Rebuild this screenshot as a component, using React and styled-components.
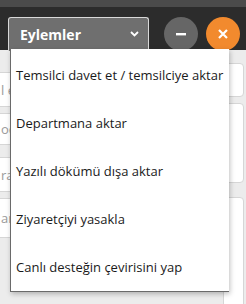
import React from "react";
import styled, { createGlobalStyle } from "styled-components";

const Global = createGlobalStyle`
  html, body { margin: 0; padding: 0; background: #ececec; }
  body { font-family: "Open Sans", "Noto Sans", sans-serif; }
`;

const Page = styled.div`
  position: relative;
  width: 246px;
  height: 304px;
  overflow: hidden;
  background: #ececec;
`;

const TopStrip = styled.div`
  height: 7px;
  background: #4b4b4b;
`;

const HeaderBar = styled.div`
  height: 43px;
  background: #2c2c2c;
  display: flex;
  align-items: flex-start;
  padding: 10px 0 0 8px;
  box-sizing: border-box;
`;

const ActionsButton = styled.button`
  width: 141px;
  height: 34px;
  box-sizing: border-box;
  background: #6f6f6f;
  border: 1px solid #d9d9d9;
  border-bottom: none;
  border-radius: 3px 3px 0 0;
  color: #fff;
  font-family: "Open Sans", sans-serif;
  font-weight: 700;
  font-size: 14px;
  display: flex;
  align-items: center;
  justify-content: space-between;
  padding: 0 9px 1px 11px;
  margin: 0;
`;

const RoundButton = styled.div`
  width: 34px;
  height: 34px;
  border-radius: 50%;
  background: ${(p) => p.$bg};
  display: flex;
  align-items: center;
  justify-content: center;
  margin-left: ${(p) => p.$ml}px;
`;

const Body = styled.div`
  display: grid;
  grid-template-columns: 216px 1fr;
  column-gap: 7px;
`;

const Column = styled.div`
  display: flex;
  flex-direction: column;
  padding-top: ${(p) => p.$pt}px;
  gap: ${(p) => p.$gap}px;
`;

const Field = styled.div`
  height: ${(p) => p.$h}px;
  box-sizing: border-box;
  background: #fff;
  border: 1px solid #d6d6d6;
  border-radius: 4px;
  margin-left: ${(p) => p.$ml || 0}px;
  margin-right: ${(p) => p.$mr || 0}px;
  margin-top: ${(p) => p.$mt || 0}px;
  display: flex;
  align-items: center;
  color: #9a9a9a;
  font-size: 13px;
  padding-left: 6px;
  white-space: nowrap;
  overflow: hidden;
`;

const Menu = styled.ul`
  position: absolute;
  top: 49px;
  left: 10px;
  width: 219px;
  margin: 0;
  padding: 2px 0 0;
  list-style: none;
  background: #fff;
  box-sizing: border-box;
  border-left: 1px solid #6a6a6a;
  border-bottom: 1px solid #6a6a6a;
  box-shadow: 1px 2px 5px rgba(0, 0, 0, 0.25);
`;

const MenuItem = styled.li`
  height: 48px;
  display: flex;
  align-items: center;
  padding-left: 5px;
  font-family: "Open Sans", sans-serif;
  font-size: 13px;
  color: #1a1a1a;
  white-space: nowrap;
`;

const items = [
  "Temsilci davet et / temsilciye aktar",
  "Departmana aktar",
  "Yazılı dökümü dışa aktar",
  "Ziyaretçiyi yasakla",
  "Canlı desteğin çevirisini yap",
];

export default function App() {
  return (
    <>
      <Global />
      <Page>
        <TopStrip />
        <HeaderBar>
          <ActionsButton>
            <span>Eylemler</span>
            <svg width="9" height="6" viewBox="0 0 9 6">
              <path d="M1 1 L4.5 4.5 L8 1" stroke="#fff" strokeWidth="1.8" fill="none" />
            </svg>
          </ActionsButton>
          <RoundButton $bg="#666666" $ml={15}>
            <svg width="12" height="12" viewBox="0 0 12 12">
              <rect x="1" y="5" width="10" height="2.4" fill="#fff" />
            </svg>
          </RoundButton>
          <RoundButton $bg="#f28a2e" $ml={8}>
            <svg width="12" height="12" viewBox="0 0 12 12">
              <path d="M2 2 L10 10 M10 2 L2 10" stroke="#fff" strokeWidth="2.2" />
            </svg>
          </RoundButton>
        </HeaderBar>
        <Body>
          <Column $pt={22} $gap={6}>
            <Field $h={35} $ml={-6}>l e</Field>
            <Field $h={32} $ml={-6}>od</Field>
            <Field $h={35} $ml={-6} $mt={6}>ra</Field>
            <Field $h={40} $ml={-6}>arı</Field>
          </Column>
          <Column $pt={13} $gap={6}>
            <Field $h={34} $mr={2} />
            <Field $h={80} $mr={2} />
            <Field $h={120} $mr={2} $mt={8} />
          </Column>
        </Body>
        <Menu>
          {items.map((t) => (
            <MenuItem key={t}>{t}</MenuItem>
          ))}
        </Menu>
      </Page>
    </>
  );
}
